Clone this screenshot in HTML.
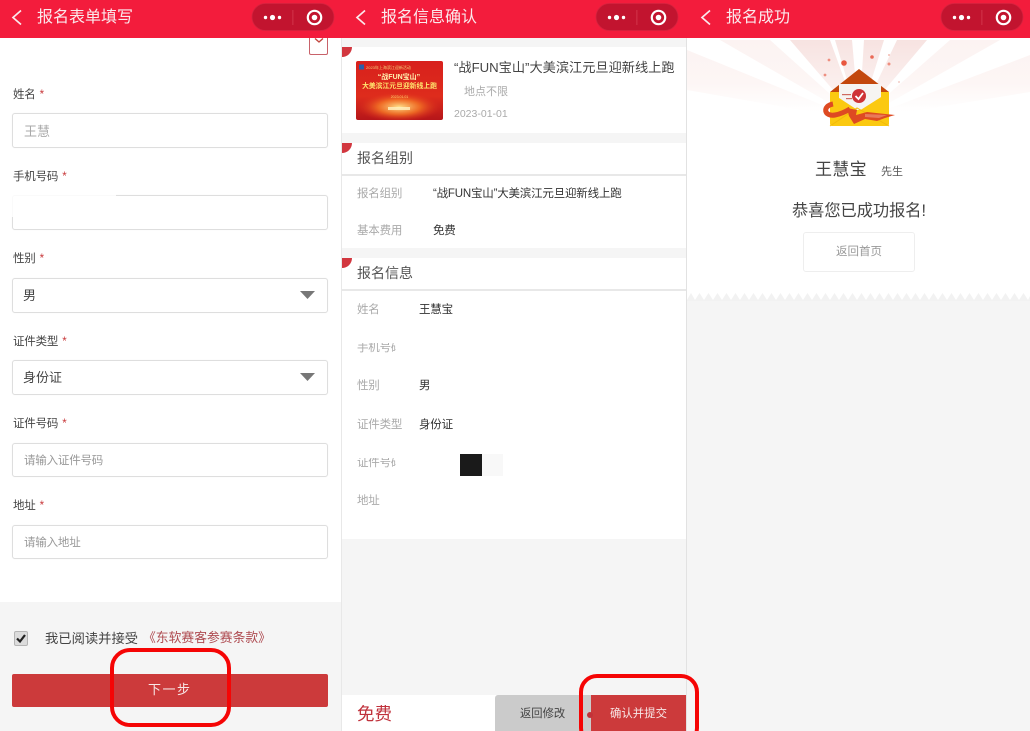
<!DOCTYPE html>
<html lang="zh"><head><meta charset="utf-8"><style>
*{box-sizing:border-box}
html,body{margin:0;padding:0;width:1030px;height:731px;overflow:hidden;background:#fff}
body{position:relative;font-family:"Liberation Sans","Noto Sans CJK SC",sans-serif;color:#444}
.a,.t{position:absolute}
.t{white-space:nowrap;line-height:1}
.hd{position:absolute;top:0;height:38px;background:#f31c3c}
.title{color:#fbe9ec;font-size:16px;top:10px}
.in{position:absolute;left:12px;width:316px;background:#fff;border:1px solid #dedede;border-radius:3px;box-shadow:0 0 1px #eee}
.lb{font-size:11.500px;letter-spacing:-.2px;color:#444;left:13px}
.lb i{font-style:normal;color:#c8383a;margin-left:1px}
.ph{font-size:11.500px;letter-spacing:-.2px;color:#999;left:24px}
.g{font-size:11.500px;letter-spacing:-.2px;color:#aaa}
.v{font-size:11.500px;letter-spacing:-.2px;color:#333}
.sh{font-size:14px;color:#555;left:357px}
.cn{position:absolute;left:342px;width:10px;height:10px;background:#d2373f;border-radius:0 0 10px 0}
</style></head><body>

<!-- Panel 1 -->
<div class="a" style="left:0;top:602px;width:341px;height:129px;background:#f5f5f5"></div>
<div class="hd" style="left:0;width:342px"></div>
<svg class="a" style="left:0;top:0" width="342" height="38"><path d="M21 10.500l-8 7 8 7" fill="none" stroke="#fbe9ec" stroke-width="1.700"/><rect x="252" y="3.500" width="82" height="27" rx="13.500" fill="#c2142f" stroke="#d4233f" stroke-width=".8"/><rect x="292.500" y="10" width=".8" height="15" fill="#d53c52"/><circle cx="265.500" cy="17.500" r="1.700" fill="#fff"/><circle cx="272.500" cy="17.500" r="2.600" fill="#fff"/><circle cx="279.500" cy="17.500" r="1.700" fill="#fff"/><circle cx="314.500" cy="17.500" r="6.700" fill="none" stroke="#fff" stroke-width="2.200"/><circle cx="314.500" cy="17.500" r="2.800" fill="#fff"/></svg>
<div class="t title" style="left:37px">报名表单填写</div>
<div class="a" style="left:309px;top:38px;width:19px;height:17px;border:1px solid #c8626a;border-top:0;border-radius:0 0 2px 2px"></div>
<svg class="a" style="left:314px;top:38px" width="10" height="6"><path d="M1 .5l4 3.500 4-3.500" fill="none" stroke="#c2473f" stroke-width="1.400"/></svg>

<div class="t lb" style="top:90px">姓名 <i>*</i></div>
<div class="in" style="top:113px;height:35px"></div>
<div class="t" style="left:24px;top:125px;font-size:13px;color:#aaa">王慧</div>
<div class="t lb" style="top:172px">手机号码 <i>*</i></div>
<div class="in" style="top:195px;height:35px"></div>
<div class="a" style="left:11px;top:193px;width:105px;height:24px;background:rgba(255,255,255,.85)"></div>
<div class="t lb" style="top:254px">性别 <i>*</i></div>
<div class="in" style="top:278px;height:35px"></div>
<div class="t" style="left:23px;top:289px;font-size:13px;color:#444">男</div>
<svg class="a" style="left:300px;top:291px" width="15" height="9"><path d="M0 0h15l-7.500 8z" fill="#777"/></svg>
<div class="t lb" style="top:337px">证件类型 <i>*</i></div>
<div class="in" style="top:360px;height:35px"></div>
<div class="t" style="left:23px;top:371px;font-size:13px;color:#444">身份证</div>
<svg class="a" style="left:300px;top:373px" width="15" height="9"><path d="M0 0h15l-7.500 8z" fill="#777"/></svg>
<div class="t lb" style="top:419px">证件号码 <i>*</i></div>
<div class="in" style="top:443px;height:34px"></div>
<div class="t ph" style="top:456px">请输入证件号码</div>
<div class="t lb" style="top:501px">地址 <i>*</i></div>
<div class="in" style="top:525px;height:34px"></div>
<div class="t ph" style="top:538px">请输入地址</div>

<div class="a" style="left:14px;top:631px;width:14px;height:15px;background:#dcdcdc;border:1px solid #b5b5b5;border-radius:2px"></div>
<svg class="a" style="left:14px;top:631px" width="14" height="15"><path d="M3 7.500l3 3 5-6.500" fill="none" stroke="#222" stroke-width="2.200"/></svg>
<div class="t" style="left:45px;top:632px;font-size:13.300px;color:#444">我已阅读并接受</div>
<div class="t" style="left:143px;top:632px;font-size:12.800px;color:#ae4a50">《东软赛客参赛条款》</div>
<div class="a" style="left:12px;top:674px;width:316px;height:33px;background:#cc3a3b;border-radius:2px"></div>
<div class="t" style="left:148px;top:683px;font-size:13px;color:#f7e6e6;letter-spacing:1.500px">下一步</div>
<div class="a" style="left:110px;top:648px;width:121px;height:79px;border:4px solid #f50505;border-radius:20px"></div>

<!-- divider -->
<div class="a" style="left:341px;top:38px;width:1px;height:693px;background:#e8e8e8"></div>

<!-- Panel 2 -->
<div class="hd" style="left:342px;width:345px"></div>
<svg class="a" style="left:342px;top:0" width="345" height="38"><path d="M23 10.500l-8 7 8 7" fill="none" stroke="#fbe9ec" stroke-width="1.700"/><rect x="254" y="3.500" width="82" height="27" rx="13.500" fill="#c2142f" stroke="#d4233f" stroke-width=".8"/><rect x="294.500" y="10" width=".8" height="15" fill="#d53c52"/><circle cx="267.500" cy="17.500" r="1.700" fill="#fff"/><circle cx="274.500" cy="17.500" r="2.600" fill="#fff"/><circle cx="281.500" cy="17.500" r="1.700" fill="#fff"/><circle cx="316.500" cy="17.500" r="6.700" fill="none" stroke="#fff" stroke-width="2.200"/><circle cx="316.500" cy="17.500" r="2.800" fill="#fff"/></svg>
<div class="t title" style="left:381px">报名信息确认</div>
<div class="a" style="left:342px;top:38px;width:344px;height:9px;background:#f5f5f5"></div>
<div class="a" style="left:342px;top:133px;width:344px;height:10px;background:#f5f5f5"></div>
<div class="a" style="left:342px;top:248px;width:344px;height:10px;background:#f5f5f5"></div>
<div class="a" style="left:342px;top:539px;width:344px;height:156px;background:#f5f5f5"></div>
<div class="a" style="left:342px;top:174px;width:344px;height:2px;background:#e8e8e8"></div>
<div class="a" style="left:342px;top:289px;width:344px;height:2px;background:#e8e8e8"></div>
<div class="cn" style="top:47px"></div><div class="cn" style="top:143px"></div><div class="cn" style="top:258px"></div>

<svg class="a" style="left:356px;top:61px" width="87" height="59" viewBox="0 0 87 59"><defs><linearGradient id="bg" x1="0" y1="0" x2="0" y2="1"><stop offset="0" stop-color="#d8201c"/><stop offset=".6" stop-color="#de2c1c"/><stop offset="1" stop-color="#b5161a"/></linearGradient><radialGradient id="gl" cx=".5" cy=".5" r=".5"><stop offset="0" stop-color="#ffe28a"/><stop offset=".5" stop-color="#f67a26" stop-opacity=".8"/><stop offset="1" stop-color="#e02a1c" stop-opacity="0"/></radialGradient></defs><rect width="87" height="59" rx="2" fill="url(#bg)"/><ellipse cx="43" cy="46" rx="42" ry="15" fill="url(#gl)"/><rect x="3" y="3.500" width="5" height="5" fill="#2a5da8"/><text x="10" y="8" font-size="4" fill="#f4cf7a">2023年上海滨江迎新活动</text><text x="43" y="18" font-size="7" font-weight="bold" text-anchor="middle" fill="#fff3b0">“战FUN宝山”</text><text x="43.500" y="27" font-size="6.800" font-weight="bold" text-anchor="middle" fill="#ffe66e">大美滨江元旦迎新线上跑</text><text x="43.500" y="37" font-size="3.500" text-anchor="middle" fill="#ffd070">2023.01.01</text><rect x="32" y="46" width="22" height="3" fill="#fff2c0" opacity=".8"/></svg>
<div class="t" style="left:454px;top:61px;font-size:13.200px;color:#444">“战FUN宝山”大美滨江元旦迎新线上跑</div>
<div class="t" style="left:464px;top:87px;font-size:11px;color:#aaa">地点不限</div>
<div class="t" style="left:454px;top:109px;font-size:10.500px;color:#aaa">2023-01-01</div>

<div class="t sh" style="top:151px">报名组别</div>
<div class="t g" style="left:357px;top:189px">报名组别</div>
<div class="t v" style="left:433px;top:189px">“战FUN宝山”大美滨江元旦迎新线上跑</div>
<div class="t g" style="left:357px;top:226px">基本费用</div>
<div class="t v" style="left:433px;top:226px">免费</div>
<div class="t sh" style="top:266px">报名信息</div>
<div class="t g" style="left:357px;top:305px">姓名</div>
<div class="t v" style="left:419px;top:305px">王慧宝</div>
<div class="t g" style="left:357px;top:343px;width:39px;overflow:hidden">手机号码</div>
<div class="t g" style="left:357px;top:381px">性别</div>
<div class="t v" style="left:419px;top:381px">男</div>
<div class="t g" style="left:357px;top:420px">证件类型</div>
<div class="t v" style="left:419px;top:420px">身份证</div>
<div class="t g" style="left:357px;top:458px;width:39px;overflow:hidden">证件号码</div>
<div class="a" style="left:460px;top:454px;width:22px;height:22px;background:#1a1a1a"></div>
<div class="a" style="left:482px;top:454px;width:21px;height:22px;background:#f8f8f8"></div>
<div class="t g" style="left:357px;top:496px">地址</div>

<div class="t" style="left:357px;top:706px;font-size:17.500px;color:#c0323c">免费</div>
<div class="a" style="left:495px;top:695px;width:96px;height:36px;background:#cbcbcb;border-radius:3px 0 0 0"></div>
<div class="t" style="left:520px;top:709px;font-size:11.300px;color:#444">返回修改</div>
<div class="a" style="left:591px;top:695px;width:95px;height:36px;background:#cc3a3b"></div>
<div class="a" style="left:587px;top:712px;width:6px;height:6px;background:#c23239;border-radius:50%"></div>
<div class="t" style="left:610px;top:709px;font-size:11.400px;color:#f7e6e6">确认并提交</div>

<div class="a" style="left:686px;top:38px;width:1px;height:693px;background:#e2e2e2"></div>

<!-- Panel 3 -->
<div class="hd" style="left:687px;width:343px"></div>
<svg class="a" style="left:687px;top:0" width="343" height="38"><path d="M23 10.500l-8 7 8 7" fill="none" stroke="#fbe9ec" stroke-width="1.700"/><rect x="254" y="3.500" width="82" height="27" rx="13.500" fill="#c2142f" stroke="#d4233f" stroke-width=".8"/><rect x="294.500" y="10" width=".8" height="15" fill="#d53c52"/><circle cx="267.500" cy="17.500" r="1.700" fill="#fff"/><circle cx="274.500" cy="17.500" r="2.600" fill="#fff"/><circle cx="281.500" cy="17.500" r="1.700" fill="#fff"/><circle cx="316.500" cy="17.500" r="6.700" fill="none" stroke="#fff" stroke-width="2.200"/><circle cx="316.500" cy="17.500" r="2.800" fill="#fff"/></svg>
<div class="t title" style="left:726px">报名成功</div>

<svg class="a" style="left:687px;top:40px" width="343" height="100" viewBox="0 0 343 100">
<defs>
<linearGradient id="r" gradientUnits="userSpaceOnUse" x1="0" y1="0" x2="0" y2="70"><stop offset="0" stop-color="#f7e3e1"/><stop offset="1" stop-color="#fdf6f5"/></linearGradient>
<linearGradient id="r2" gradientUnits="userSpaceOnUse" x1="0" y1="0" x2="0" y2="72"><stop offset="0" stop-color="#fcf3f2"/><stop offset=".6" stop-color="#fdf6f5"/><stop offset="1" stop-color="#fff"/></linearGradient>
</defs>
<path d="M172 80L33 0H83ZM172 80L263 0H313ZM172 80L0 10V50ZM172 80L343 15V52Z" fill="url(#r2)"/>
<path d="M172 80L103 0H143ZM172 80L148 0H165ZM172 80L177 0H197ZM172 80L210 0H240Z" fill="url(#r)"/>
<circle cx="157" cy="23" r="2.800" fill="#e9573f"/><circle cx="142" cy="20" r="1.400" fill="#ee8f80"/><circle cx="138" cy="35" r="1.400" fill="#ee8f80"/><circle cx="185" cy="17" r="1.800" fill="#ea6a57"/><circle cx="202" cy="24" r="1.500" fill="#ee8f80"/><circle cx="202" cy="15" r="1" fill="#f4bbb2"/><circle cx="212" cy="42" r="1" fill="#f4cdc6"/>
<path d="M143 52H202V83Q202 86 199 86H146Q143 86 143 83Z" fill="#fbc910"/>
<path d="M143 52L172 29L202 52Z" fill="#c3470c"/>
<path d="M152 44H194V70H152Z" fill="#f6f4f2"/>
<path d="M143 52L172 71L202 52V83Q202 86 199 86H146Q143 86 143 83Z" fill="#fbc910"/>
<path d="M143 86L170 68L202 86" fill="none" stroke="#f2b90a" stroke-width="1"/>
<circle cx="172" cy="56" r="7" fill="#cf3336"/><path d="M168.500 56l3 3 4.500-6" fill="none" stroke="#fff" stroke-width="1.800"/>
<rect x="155" y="54" width="9" height="1.200" fill="#cf6a60"/><rect x="159" y="58" width="6" height="1.200" fill="#cf6a60"/>
<path d="M146 64C135 66 137 77 148 75C154 74 158 72 163 69" fill="none" stroke="#de4a22" stroke-width="5"/>
<path d="M160 68L170 70L169 75L180 72L208 75L198 78L190 81L178 79L167 84L162 76Z" fill="#de4a22"/>
<path d="M178 74L200 75L192 78L178 77Z" fill="#e9795a"/>
</svg>

<div class="t" style="left:815px;top:161px;font-size:17px;color:#444;letter-spacing:.3px">王慧宝</div>
<div class="t" style="left:881px;top:167px;font-size:11px;color:#555">先生</div>
<div class="t" style="left:792px;top:203px;font-size:16.200px;color:#444">恭喜您已成功报名!</div>
<div class="a" style="left:803px;top:232px;width:112px;height:40px;border:1px solid #eee;border-radius:3px;background:#fff"></div>
<div class="t" style="left:836px;top:247px;font-size:11.500px;color:#999">返回首页</div>
<div class="a" style="left:687px;top:300px;width:343px;height:431px;background:#f5f5f5"></div>
<svg class="a" style="left:687px;top:291px" width="343" height="10"><path fill="#f2f2f2" d="M0 9L4 2L8 9L12.500 2L17 9L21.500 2L26 9L30.500 2L35 9L39.500 2L44 9L48.500 2L53 9L57.500 2L62 9L66.500 2L71 9L75.500 2L80 9L84.500 2L89 9L93.500 2L98 9L102.500 2L107 9L111.500 2L116 9L120.500 2L125 9L129.500 2L134 9L138.500 2L143 9L147.500 2L152 9L156.500 2L161 9L165.500 2L170 9L174.500 2L179 9L183.500 2L188 9L192.500 2L197 9L201.500 2L206 9L210.500 2L215 9L219.500 2L224 9L228.500 2L233 9L237.500 2L242 9L246.500 2L251 9L255.500 2L260 9L264.500 2L269 9L273.500 2L278 9L282.500 2L287 9L291.500 2L296 9L300.500 2L305 9L309.500 2L314 9L318.500 2L323 9L327.500 2L332 9L336.500 2L341 9L343 5V10H0Z"/></svg>

<!-- annotation on top -->
<div class="a" style="left:579px;top:674px;width:120px;height:72px;border:4px solid #f50505;border-radius:18px"></div>
</body></html>
